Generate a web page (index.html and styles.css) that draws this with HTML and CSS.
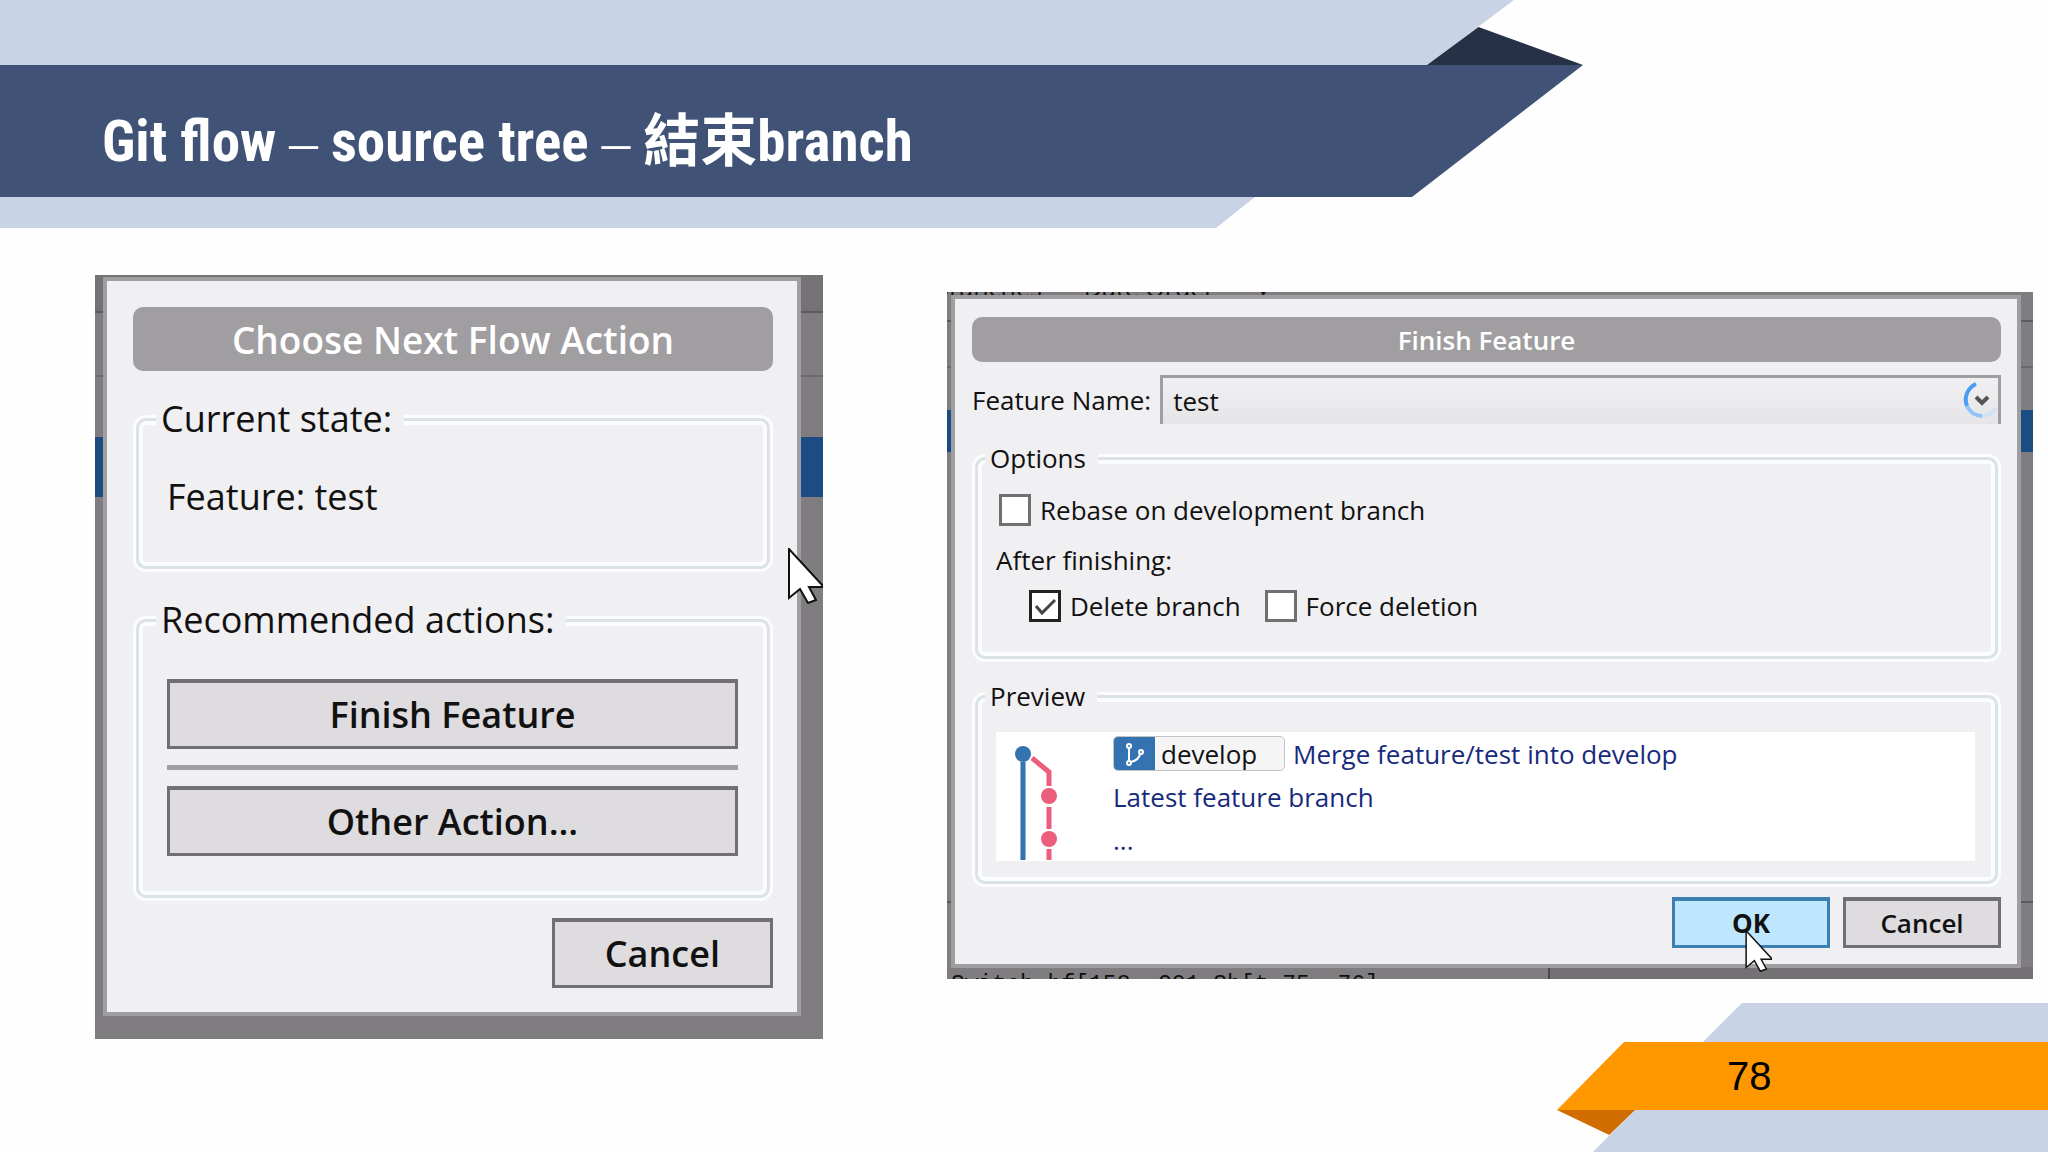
FILE: index.html
```html
<!DOCTYPE html>
<html lang="zh-Hant">
<head>
    <meta charset="UTF-8">
    <meta name="viewport" content="width=device-width, initial-scale=1.0">
    <title>Git flow – source tree</title>
    <link rel="stylesheet" href="styles.css">
</head>
<body>

    <header class="slide-header">
        <div class="band band-top"></div>
        <div class="band band-title">
            <h1>Git flow <span class="dash">–</span> source tree <span class="dash">–</span> 結束branch</h1>
        </div>
        <div class="band band-bottom"></div>
        <div class="header-fold"></div>
    </header>

    <main class="shots">
        <section class="shot shot-action">
            <div class="dialog">
                <h2 class="banner">Choose Next Flow Action</h2>
                <fieldset class="group state">
                    <legend>Current state:</legend>
                    <p>Feature: test</p>
                </fieldset>
                <fieldset class="group actions">
                    <legend>Recommended actions:</legend>
                    <button type="button">Finish Feature</button>
                    <hr>
                    <button type="button">Other Action...</button>
                </fieldset>
                <div class="buttons">
                    <button type="button">Cancel</button>
                </div>
            </div>
            <svg class="cursor" viewBox="0 0 35 56">
                <path d="M1 1 V50 L12 41 L20 55 L28 52 L21 39 H36 Z"/>
            </svg>
        </section>

        <section class="shot shot-finish">
            <p class="behind behind-top"><span>Branches</span><span>Date Order</span><span>▾</span></p>
            <div class="dialog">
                <h2 class="banner">Finish Feature</h2>
                <div class="name-row">
                    <label for="feature">Feature Name:</label>
                    <div class="select-wrap">
                        <select id="feature">
                            <option>test</option>
                        </select>
                        <svg class="spinner" viewBox="0 0 36 40">
                            <path d="M13 4 A17 17 0 0 0 4 26" stroke="#4a9df5"/>
                            <path d="M4 26 A17 17 0 0 0 19 36" stroke="#8fc4f8"/>
                            <path d="M19 36 A17 17 0 0 0 33 28" stroke="#cfe2f6"/>
                            <path d="M13 17 L19 23 L25 17" stroke="#555"/>
                        </svg>
                    </div>
                </div>
                <fieldset class="group options">
                    <legend>Options</legend>
                    <label class="check"><input type="checkbox"> Rebase on development branch</label>
                    <p>After finishing:</p>
                    <div class="check-row">
                        <label class="check"><input type="checkbox" checked> Delete branch</label>
                        <label class="check"><input type="checkbox"> Force deletion</label>
                    </div>
                </fieldset>
                <fieldset class="group preview">
                    <legend>Preview</legend>
                    <div class="log">
                        <svg class="graph" viewBox="0 0 80 128">
                            <path d="M27 30 V128" stroke="#8db4d8" stroke-width="6"/>
                            <path d="M27 30 V128" stroke="#3572b0" stroke-width="4"/>
                            <path d="M36 26 L53 40 V54 M53 75 V97 M53 117 V128" stroke="#ec5f7c" stroke-width="5"/>
                            <circle cx="27" cy="22" r="8" fill="#3572b0"/>
                            <circle cx="53" cy="64" r="8" fill="#ec5f7c"/>
                            <circle cx="53" cy="107" r="8" fill="#ec5f7c"/>
                        </svg>
                        <ul>
                            <li>
                                <span class="branch">
                                    <svg viewBox="0 0 41 33">
                                        <g fill="none" stroke="#fff" stroke-width="2">
                                            <path d="M15 11 V24 M17 25 Q25 23 26 17"/>
                                            <circle cx="15" cy="9" r="2"/>
                                            <circle cx="15" cy="26" r="2"/>
                                            <circle cx="27" cy="15" r="2"/>
                                        </g>
                                    </svg>
                                    develop
                                </span>
                                Merge feature/test into develop
                            </li>
                            <li>Latest feature branch</li>
                            <li>...</li>
                        </ul>
                    </div>
                </fieldset>
                <div class="buttons">
                    <button type="button" class="primary">OK</button>
                    <button type="button">Cancel</button>
                </div>
            </div>
            <p class="behind behind-bottom">Switch hf[158..201 Sh[t 75..76]</p>
            <svg class="cursor" viewBox="0 0 35 56">
                <path d="M1 1 V50 L12 41 L20 55 L28 52 L21 39 H36 Z"/>
            </svg>
        </section>
    </main>

    <footer class="slide-footer">
        <div class="band foot-top"></div>
        <div class="band foot-page">78</div>
        <div class="band foot-bottom"></div>
        <div class="footer-fold"></div>
    </footer>

</body>
</html>
```
FILE: styles.css
```css
* {
    box-sizing: border-box;
}
body {
    margin: 0;
    min-height: 100vh;
    display: flex;
    flex-direction: column;
    background: #fefefe;
    color: #111;
    font-family: "Open Sans", "Noto Sans", sans-serif;
    overflow-x: hidden;
}
h1, h2, p, ul {
    margin: 0;
}

/* slide header */
.slide-header {
    position: relative;
}
.band {
    background: #c8d3e5;
}
.band-top {
    width: 1514px;
    max-width: 100%;
    height: 65px;
    clip-path: polygon(0 0, 100% 0, calc(100% - 87px) 100%, 0 100%);
}
.band-title {
    width: 1583px;
    max-width: 100%;
    height: 132px;
    padding: 37px 102px 0;
    background: #405376;
    clip-path: polygon(0 0, 100% 0, calc(100% - 171px) 100%, 0 100%);
}
.band-title h1 {
    color: #fff;
    font-family: "Roboto Condensed", "Liberation Sans Narrow", "Noto Sans CJK TC", sans-serif;
    font-size: 57px;
    line-height: 80px;
    white-space: nowrap;
}
.dash {
    font-family: "Liberation Serif", serif;
    font-weight: 400;
}
.band-bottom {
    width: 1255px;
    max-width: 80%;
    height: 31px;
    clip-path: polygon(0 0, 100% 0, calc(100% - 39px) 100%, 0 100%);
}
.header-fold {
    position: absolute;
    left: 1427px;
    top: 27px;
    width: 156px;
    height: 38px;
    background: #263147;
    clip-path: polygon(33% 0, 100% 100%, 0 100%);
}

/* screenshots */
.shots {
    display: grid;
    grid-template-columns: 728fr 1086fr;
    gap: 124px;
    align-items: start;
    padding: 47px 15px 0 95px;
}
.shot {
    position: relative;
    background-color: #807d80;
    background-repeat: no-repeat;
    overflow: hidden;
}
.dialog {
    background: #f0eff1;
    border: 4px solid #a09ea0;
}
.banner {
    background: #a09ea0;
    border-radius: 10px;
    color: #fff;
    font-weight: 600;
    text-align: center;
}
.group {
    min-width: 0;
    margin: 0;
    border: 3px solid #dbe3e5;
    border-radius: 10px;
    box-shadow: 0 0 0 3px #fbfcfd, inset 0 0 0 4px #fbfcfd;
}
.group legend {
    padding: 0 12px 0 5px;
    background: #f0eff1;
}
button {
    background: #dedcde;
    border: 3px solid #716f71;
    border-top-width: 4px;
    color: #111;
    font: inherit;
    font-weight: 600;
}
.buttons {
    display: flex;
    justify-content: flex-end;
}
.cursor {
    position: absolute;
    fill: #fff;
    stroke: #111;
    stroke-width: 2;
}

.shot-action {
    padding: 2px 22px 23px 8px;
    background-image:
        linear-gradient(#1b4d83, #1b4d83),
        linear-gradient(#5c5a5c, #5c5a5c),
        linear-gradient(#6a686a, #6a686a),
        linear-gradient(#757275, #757275);
    background-size: 100% 60px, 100% 2px, 100% 2px, 100% 36px;
    background-position: 0 162px, 0 36px, 0 100px, 0 0;
    font-size: 36px;
    line-height: 48px;
}
.shot-action .dialog {
    padding: 26px 24px 24px 26px;
}
.shot-action .banner {
    padding: 9px 8px 7px;
    font-size: 37px;
    line-height: 48px;
}
.shot-action .group {
    margin: 24px 3px 0;
}
.shot-action legend {
    margin-left: -11px;
}
.state {
    padding: 30px 28px 45px;
}
.actions {
    display: flex;
    flex-direction: column;
    padding: 35px 29px 39px 28px;
}
.shot-action .actions {
    margin-top: 27px;
}
.shot-action button {
    height: 70px;
    padding: 0 50px;
}
.shot-action hr {
    width: 100%;
    height: 5px;
    margin: 16px 0;
    border: 0;
    background: #a09ea0;
}
.shot-action .buttons {
    margin-top: 20px;
}
.shot-action .cursor {
    left: 693px;
    top: 273px;
    width: 35px;
    height: 56px;
}

.shot-finish {
    margin-top: 17px;
    padding: 3px 12px 11px 4px;
    background-image:
        linear-gradient(#1b4d83, #1b4d83),
        linear-gradient(#5c5a5c, #5c5a5c),
        linear-gradient(#6a686a, #6a686a),
        linear-gradient(#5c5a5c, #5c5a5c),
        linear-gradient(#4a484a, #4a484a),
        linear-gradient(#747174, #747174);
    background-size: 100% 42px, 100% 2px, 100% 2px, 100% 2px, 2px 12px, 485px 12px;
    background-position: 0 118px, 0 28px, 0 74px, 0 609px, 601px 100%, 100% 100%;
    font-size: 26px;
    line-height: 36px;
}
.shot-finish .dialog {
    position: relative;
    padding: 18px 16px 16px 17px;
}
.shot-finish .banner {
    padding: 5px 4px 3px;
    font-size: 26px;
    line-height: 37px;
}
.name-row {
    display: flex;
    align-items: center;
    gap: 9px;
    margin-top: 13px;
}
.select-wrap {
    position: relative;
    flex: 1;
}
.select-wrap select {
    display: block;
    width: 100%;
    height: 49px;
    padding: 0 10px;
    appearance: none;
    background: linear-gradient(#f0eff1, #e5e4e6);
    border: 3px solid #a09ea0;
    border-bottom: 0;
    border-radius: 0;
    color: #111;
    font: inherit;
}
.spinner {
    position: absolute;
    right: 2px;
    top: 5px;
    width: 36px;
    height: 40px;
    fill: none;
    stroke-width: 4;
}
.shot-finish .group {
    margin: 16px 3px 0;
}
.shot-finish legend {
    margin-left: -11px;
}
.check {
    display: flex;
    align-items: center;
    gap: 9px;
    margin-left: 3px;
}
.check input {
    width: 32px;
    height: 32px;
    margin: 0;
    appearance: none;
    background: #fff;
    border: 3px solid #716f71;
}
.check input:checked {
    border-color: #222;
    background: #fff url("data:image/svg+xml,%3Csvg xmlns='http://www.w3.org/2000/svg' viewBox='0 0 26 26'%3E%3Cpath d='M4 13 L10 20 L23 7' fill='none' stroke='%23444' stroke-width='3'/%3E%3C/svg%3E");
}
.options {
    padding: 16px 20px 32px 18px;
}
.options p {
    margin: 14px 0 10px;
}
.check-row {
    display: flex;
    gap: 21px;
    padding-left: 30px;
}
.shot-finish .preview {
    margin-top: 19px;
    padding: 18px 20px 20px 18px;
}
.log {
    display: flex;
    height: 129px;
    background: #fff;
    color: #182a7c;
    overflow: hidden;
}
.graph {
    width: 80px;
    height: 128px;
    margin-right: 37px;
    fill: none;
}
.log ul {
    padding: 0;
    list-style: none;
}
.log li {
    display: flex;
    align-items: center;
    gap: 8px;
    height: 43px;
}
.branch {
    display: flex;
    align-items: center;
    gap: 6px;
    width: 172px;
    height: 35px;
    background: #f5f5f5;
    border: 1px solid #c4c4c4;
    border-radius: 5px;
    color: #111;
    overflow: hidden;
}
.branch svg {
    width: 41px;
    height: 33px;
    background: #3572b0;
}
.shot-finish .buttons {
    gap: 13px;
    margin-top: 13px;
}
.shot-finish button {
    width: 158px;
    height: 51px;
    padding: 0;
}
.shot-finish .primary {
    background: #bee6fd;
    border-color: #3c7fb1;
    font-weight: 700;
}
.shot-finish .cursor {
    left: 798px;
    top: 638px;
    width: 27px;
    height: 42px;
}

/* what shows of the main window around the dialog */
.behind {
    position: absolute;
    white-space: nowrap;
}
.behind-top {
    display: flex;
    gap: 42px;
    left: -14px;
    top: -23px;
    font-size: 25px;
}
.behind-bottom {
    left: 4px;
    bottom: -24px;
    font-family: "Liberation Mono", monospace;
    font-size: 23px;
}

/* slide footer, its first band reaches up beside the screenshots */
.slide-footer {
    position: relative;
    display: flex;
    flex-direction: column;
    align-items: flex-end;
    margin-top: -36px;
}
.foot-top {
    width: 345px;
    height: 39px;
    clip-path: polygon(39px 0, 100% 0, 100% 100%, 0 100%);
}
.foot-page {
    width: 491px;
    height: 68px;
    padding-left: 170px;
    background: #ff9800;
    clip-path: polygon(67px 0, 100% 0, 100% 100%, 0 100%);
    color: #000;
    font-family: "Liberation Sans", Arial, sans-serif;
    font-size: 40px;
    line-height: 68px;
}
.foot-bottom {
    width: 456px;
    height: 43px;
    clip-path: polygon(43px 0, 100% 0, 100% 100%, 0 100%);
}
.footer-fold {
    position: absolute;
    right: 413px;
    top: 107px;
    width: 78px;
    height: 25px;
    background: #d06c00;
    clip-path: polygon(0 0, 100% 0, 67% 100%);
}
```
